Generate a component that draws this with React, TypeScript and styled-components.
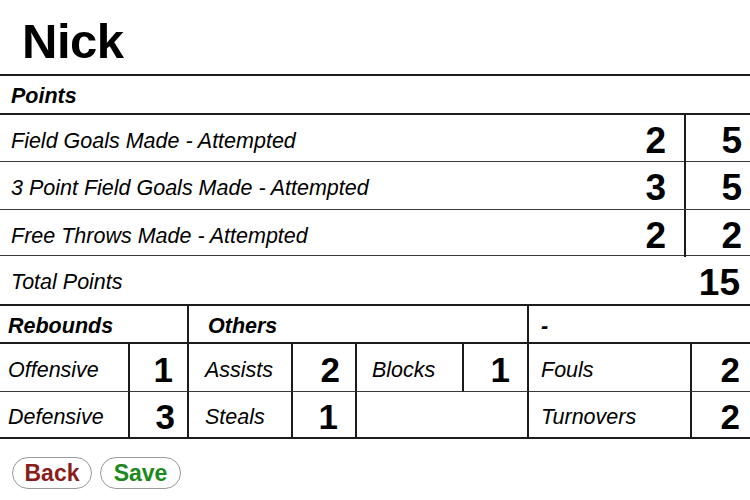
import React from 'react'
import styled, { createGlobalStyle } from 'styled-components'

const GlobalStyle = createGlobalStyle`
  html, body {
    margin: 0;
    padding: 0;
    background: #ffffff;
  }
  body {
    font-family: "Liberation Sans", Arial, Helvetica, sans-serif;
    color: #000;
  }
  * {
    box-sizing: border-box;
  }
`

const Page = styled.div`
  width: 750px;
  height: 500px;
  overflow: hidden;
`

const Title = styled.h1`
  margin: 0;
  height: 74px;
  padding: 17px 0 0 22px;
  font-size: 49px;
  line-height: 49px;
  font-weight: 700;
  letter-spacing: -0.5px;
`

const Section = styled.div`
  border-top: 2px solid #1c1c1c;
`

const SectionHeader = styled.div`
  height: 39px;
  border-bottom: 2px solid #1c1c1c;
  display: flex;
  align-items: center;
  padding: 4px 0 0 11px;
  font-size: 21.5px;
  font-weight: 700;
  font-style: italic;
`

const PointRow = styled.div<{ $height: number; $thick?: boolean }>`
  display: grid;
  grid-template-columns: 1fr 100px 66px;
  height: ${(p) => p.$height}px;
  border-bottom: ${(p) => (p.$thick ? '2px solid #1c1c1c' : '1px solid #3a3a3a')};
`

const Label = styled.div<{ $pad?: number }>`
  display: flex;
  align-items: center;
  padding: 5px 0 0 ${(p) => p.$pad ?? 11}px;
  font-size: 21.5px;
  font-style: italic;
  white-space: nowrap;
`

const Value = styled.div<{ $pad: number; $size?: number; $divider?: boolean }>`
  display: flex;
  align-items: center;
  justify-content: flex-end;
  padding: 5px ${(p) => p.$pad}px 0 0;
  font-size: ${(p) => p.$size ?? 37}px;
  font-weight: 700;
  border-left: ${(p) => (p.$divider ? '2px solid #1c1c1c' : 'none')};
`

const StatGrid = styled.div`
  display: grid;
  grid-template-columns: 130px 59px 104px 64px 107px 65px 163px 58px;
  grid-template-rows: 38px 48px 47px;
`

const Cell = styled.div<{
  $span?: number
  $right?: boolean
  $bottom: 'thin' | 'thick'
  $align?: 'start' | 'end'
  $pad?: number
  $head?: boolean
  $num?: boolean
}>`
  grid-column: span ${(p) => p.$span ?? 1};
  display: flex;
  align-items: center;
  justify-content: ${(p) => (p.$align === 'end' ? 'flex-end' : 'flex-start')};
  padding: ${(p) => (p.$head ? '4px' : '5px')} ${(p) => (p.$align === 'end' ? p.$pad ?? 12 : 0)}px 0
    ${(p) => (p.$align === 'end' ? 0 : p.$pad ?? 8)}px;
  border-right: ${(p) => (p.$right ? '2px solid #1c1c1c' : 'none')};
  border-bottom: ${(p) => (p.$bottom === 'thick' ? '2px solid #1c1c1c' : '1px solid #3a3a3a')};
  font-size: ${(p) => (p.$num ? 35 : 21.5)}px;
  font-weight: ${(p) => (p.$head || p.$num ? 700 : 400)};
  font-style: ${(p) => (p.$num ? 'normal' : 'italic')};
  white-space: nowrap;
`

const Buttons = styled.div`
  display: flex;
  gap: 8px;
  padding: 18px 0 0 12px;
`

const PillButton = styled.button<{ $color: string; $width: number }>`
  width: ${(p) => p.$width}px;
  height: 32px;
  border: 1px solid #9a9a9a;
  border-radius: 16px;
  background: #fff;
  color: ${(p) => p.$color};
  font-family: "Liberation Sans", Arial, sans-serif;
  font-size: 23px;
  font-weight: 700;
  padding: 1px 0 0;
  cursor: pointer;
`

const pointRows = [
  { label: 'Field Goals Made - Attempted', made: 2, att: 5, height: 47 },
  { label: '3 Point Field Goals Made - Attempted', made: 3, att: 5, height: 48 },
  { label: 'Free Throws Made - Attempted', made: 2, att: 2, height: 46 },
]

const App = () => {
  return (
    <Page>
      <GlobalStyle />
      <Title>Nick</Title>
      <Section>
        <SectionHeader>Points</SectionHeader>
        {pointRows.map((row) => (
          <PointRow key={row.label} $height={row.height}>
            <Label>{row.label}</Label>
            <Value $pad={18}>{row.made}</Value>
            <Value $pad={8} $divider>
              {row.att}
            </Value>
          </PointRow>
        ))}
        <PointRow $height={50} $thick>
          <Label>Total Points</Label>
          <div />
          <Value $pad={10}>15</Value>
        </PointRow>
      </Section>
      <StatGrid>
        <Cell $span={2} $right $bottom="thick" $head>
          Rebounds
        </Cell>
        <Cell $span={4} $right $bottom="thick" $head $pad={19}>
          Others
        </Cell>
        <Cell $span={2} $bottom="thick" $head $pad={12}>
          -
        </Cell>

        <Cell $right $bottom="thin">Offensive</Cell>
        <Cell $right $bottom="thin" $align="end" $num $pad={14}>1</Cell>
        <Cell $right $bottom="thin" $pad={16}>Assists</Cell>
        <Cell $right $bottom="thin" $align="end" $num $pad={15}>2</Cell>
        <Cell $right $bottom="thin" $pad={15}>Blocks</Cell>
        <Cell $right $bottom="thin" $align="end" $num $pad={17}>1</Cell>
        <Cell $right $bottom="thin" $pad={12}>Fouls</Cell>
        <Cell $bottom="thin" $align="end" $num $pad={10}>2</Cell>

        <Cell $right $bottom="thick">Defensive</Cell>
        <Cell $right $bottom="thick" $align="end" $num $pad={12}>3</Cell>
        <Cell $right $bottom="thick" $pad={16}>Steals</Cell>
        <Cell $right $bottom="thick" $align="end" $num $pad={17}>1</Cell>
        <Cell $span={2} $right $bottom="thick" />
        <Cell $right $bottom="thick" $pad={12}>Turnovers</Cell>
        <Cell $bottom="thick" $align="end" $num $pad={10}>2</Cell>
      </StatGrid>
      <Buttons>
        <PillButton $color="#8b1c1c" $width={80}>Back</PillButton>
        <PillButton $color="#1a8a1a" $width={81}>Save</PillButton>
      </Buttons>
    </Page>
  )
}

export default App
